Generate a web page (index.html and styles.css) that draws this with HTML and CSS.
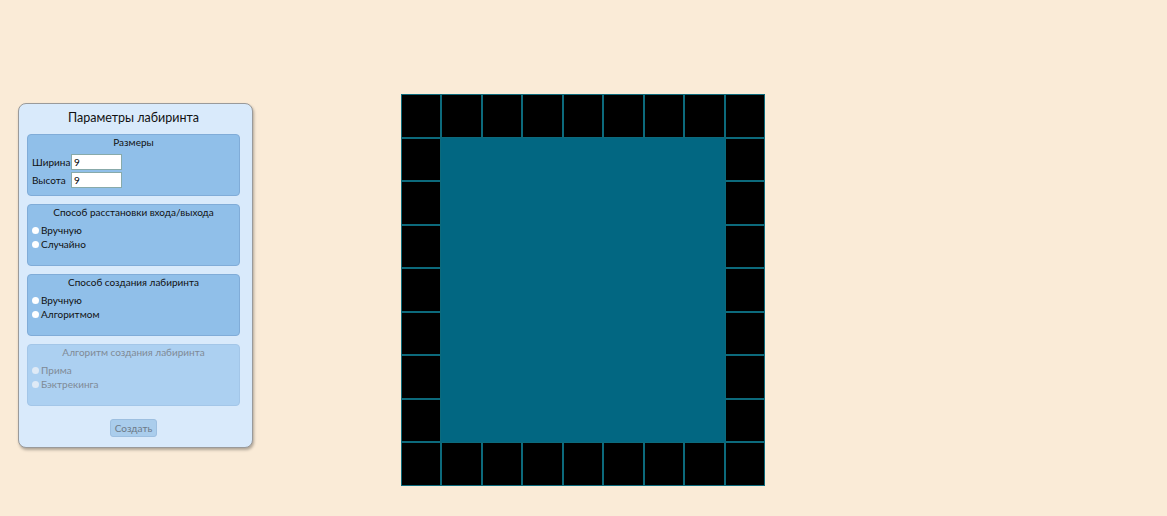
FILE: index.html
```html
<!DOCTYPE html>
<html lang="ru">
<head>
<meta charset="utf-8">
<title>Лабиринт</title>
<link rel="stylesheet" href="styles.css">
</head>
<body>
<div class="page">
  <form class="panel">
    <div class="title">Параметры лабиринта</div>
    <div class="group">
      <div class="legend">Размеры</div>
      <div class="row"><label class="lbl">Ширина</label><input class="num" type="text" value="9"></div>
      <div class="row"><label class="lbl">Высота</label><input class="num" type="text" value="9"></div>
    </div>
    <div class="group">
      <div class="legend">Способ расстановки входа/выхода</div>
      <div class="radio"><span class="dot"></span>Вручную</div>
      <div class="radio"><span class="dot"></span>Случайно</div>
    </div>
    <div class="group">
      <div class="legend">Способ создания лабиринта</div>
      <div class="radio"><span class="dot"></span>Вручную</div>
      <div class="radio"><span class="dot"></span>Алгоритмом</div>
    </div>
    <div class="group disabled">
      <div class="legend">Алгоритм создания лабиринта</div>
      <div class="radio"><span class="dot"></span>Прима</div>
      <div class="radio"><span class="dot"></span>Бэктрекинга</div>
    </div>
    <div class="actions"><span class="btn">Создать</span></div>
  </form>
  <div class="maze" id="maze"></div>
</div>
<script>
  var m = document.getElementById('maze');
  for (var r = 0; r < 9; r++) {
    for (var c = 0; c < 9; c++) {
      var d = document.createElement('div');
      var wall = r === 0 || r === 8 || c === 0 || c === 8;
      d.className = wall ? 'cell wall' : 'cell open';
      m.appendChild(d);
    }
  }
</script>
</body>
</html>
```
FILE: styles.css
```css
html, body {
  margin: 0;
  padding: 0;
  background: #faebd7;
  height: 100%;
}
.page {
  display: flex;
  align-items: flex-start;
  padding: 94px 0 0 18px;
  font-family: "Comic Sans MS", "Lato", "DejaVu Sans", sans-serif;
  color: #111;
}
.panel {
  box-sizing: border-box;
  width: 235px;
  margin-top: 9px;
  background: #d9eafb;
  border: 1px solid #9a9a9a;
  border-radius: 8px;
  box-shadow: 1px 2px 3px rgba(0,0,0,0.3);
  padding: 6px 12px 10px 8px;
  display: flex;
  flex-direction: column;
  gap: 8px;
}
.title {
  text-align: center;
  font-size: 12.5px;
  line-height: 16px;
  margin: 0;
}
.group {
  box-sizing: border-box;
  background: #90bfe9;
  border: 1px solid #80acd8;
  border-radius: 4px;
  padding: 0 4px 4px 4px;
  font-size: 10px;
  min-height: 62px;
}
.group .legend {
  text-align: center;
  line-height: 14px;
  margin-bottom: 4px;
}
.row {
  display: flex;
  align-items: center;
  height: 18px;
}
.lbl {
  width: 39px;
}
.num {
  box-sizing: border-box;
  width: 51px;
  height: 16px;
  border: 1px solid #8aa;
  padding: 0 2px;
  font-family: inherit;
  font-size: 10px;
  background: #fff;
}
.radio {
  display: flex;
  align-items: center;
  line-height: 14px;
  height: 14px;
}
.dot {
  width: 7px;
  height: 7px;
  border-radius: 50%;
  background: #fff;
  margin-right: 2px;
}
.group.disabled {
  background: #acd0f1;
  border-color: #a3c6e8;
  color: #7f8a96;
}
.group.disabled .dot {
  background: #dfeaf6;
}
.actions {
  display: flex;
  justify-content: center;
  padding-top: 5px;
}
.btn {
  background: #aacdec;
  border: 1px solid #9dbfe0;
  border-radius: 3px;
  font-size: 10px;
  color: #6d7a88;
  padding: 2px 4px;
  line-height: 12px;
}
.maze {
  margin-left: 148px;
  width: 364px;
  height: 392px;
  display: grid;
  grid-template-columns: repeat(9, 1fr);
  grid-template-rows: repeat(9, 1fr);
}
.cell {
  box-sizing: border-box;
  border: 1px solid #0c6a7c;
}
.cell.wall {
  background: #000;
}
.cell.open {
  background: #026782;
  border-color: #026782;
}
```
